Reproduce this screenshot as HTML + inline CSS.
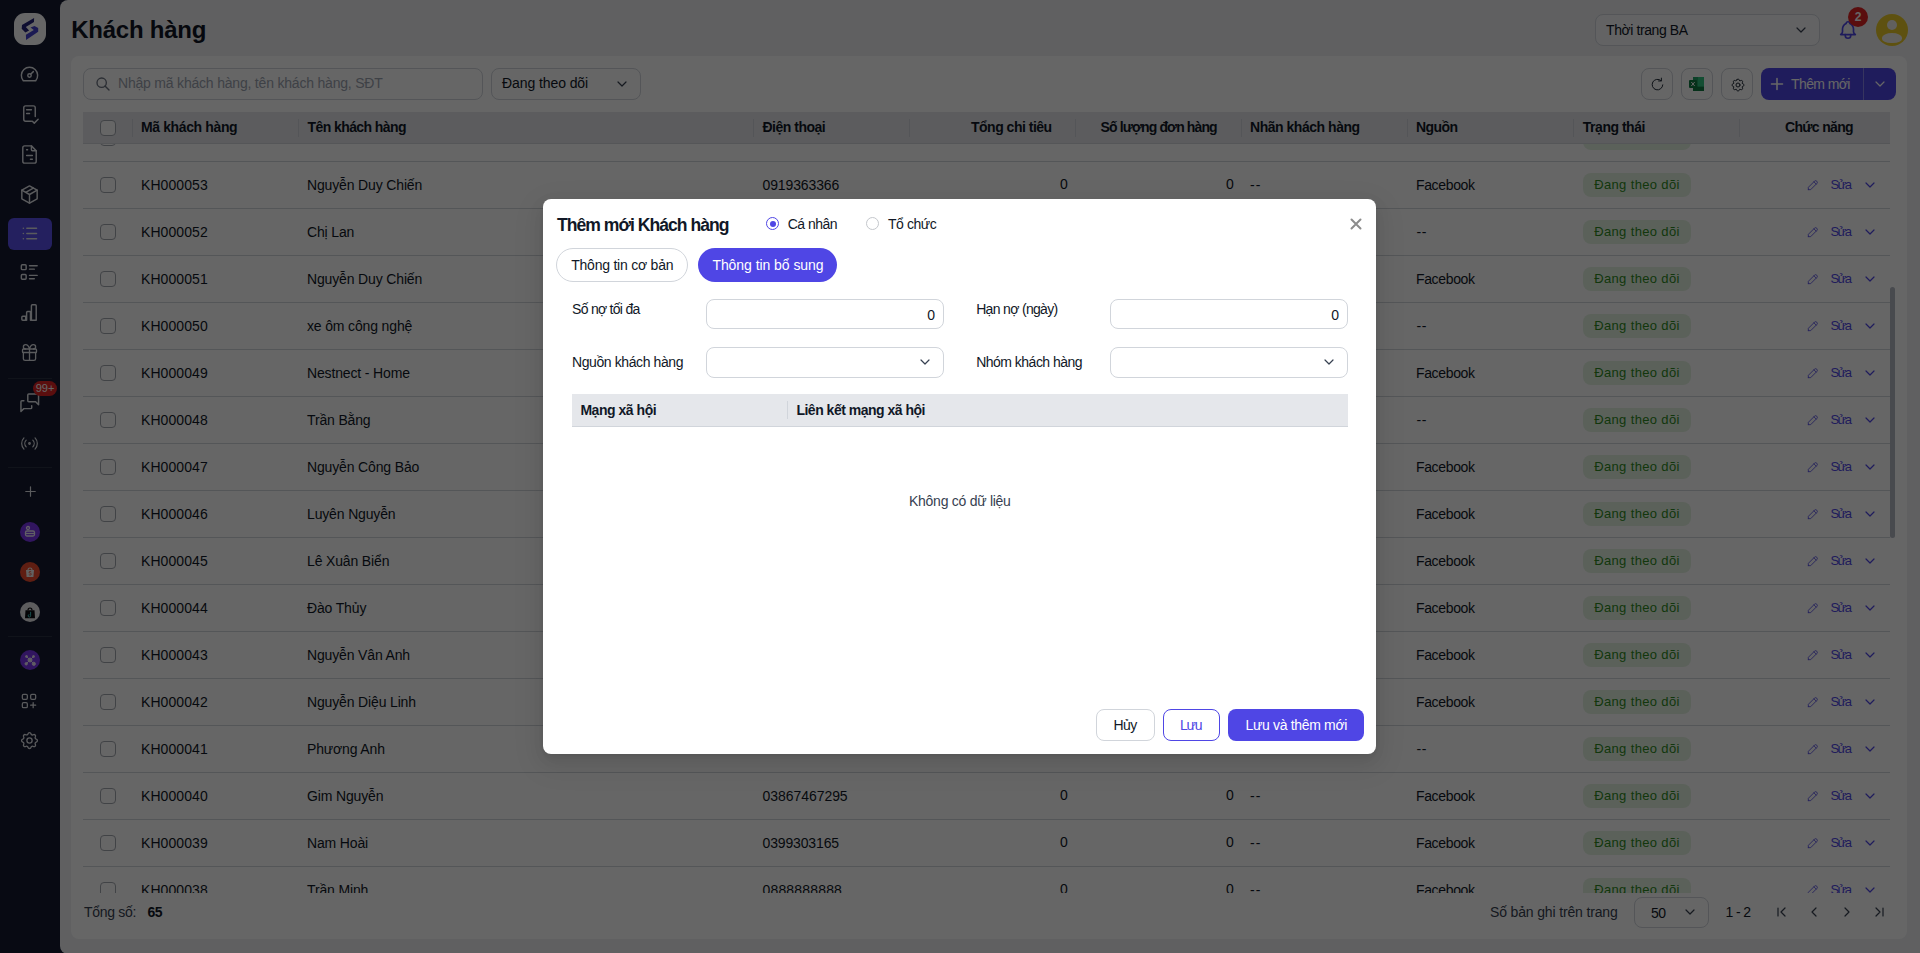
<!DOCTYPE html>
<html><head><meta charset="utf-8"><style>
*{box-sizing:content-box}
html,body{margin:0;padding:0;width:1920px;height:953px;overflow:hidden;background:#141a30;font-family:"Liberation Sans",sans-serif}
.si{position:absolute}
.sdiv{position:absolute;left:8px;width:44px;height:1px;background:#2a3042}
.circ{position:absolute;left:20px;width:20px;height:20px;border-radius:50%}
.circ svg{position:absolute;left:0;top:0}
.t{position:absolute;white-space:nowrap;color:#111827;line-height:18px}
.r14{font-size:14px;letter-spacing:-0.15px}
.b14{font-size:14px;font-weight:bold;letter-spacing:-0.45px;color:#111827}
.title{font-size:24px;font-weight:bold;line-height:30px;letter-spacing:-0.25px;color:#0f1523}
.mtitle{font-size:17.6px;font-weight:bold;line-height:22px;color:#111827}
.ph{color:#9ca3af}
.sua{color:#4f46e5}
.r13{font-size:13px}
.box{position:absolute;border:1px solid #d1d5db;background:#fff}
.cb{position:absolute;width:14px;height:14px;border:1px solid #a3a8b0;border-radius:4px;background:#fff}
.sep{position:absolute;left:83px;width:1807px;height:1px;background:#d3d6dc}
.tag{position:absolute;width:108px;height:24px;border-radius:8px;background:#e4f3e2}
.tagt{color:#2f8a22}
.radio{position:absolute;width:11px;height:11px;border:1px solid #c4c7cc;border-radius:50%;background:#fff}
.radio.on{border-color:#4f46e5}
.radio.on::after{content:"";position:absolute;left:2.5px;top:2.5px;width:6px;height:6px;border-radius:50%;background:#4f46e5}
</style></head><body>
<div id="side" style="position:absolute;left:0;top:0;width:60px;height:953px"><div style="position:absolute;left:14px;top:13px;width:32px;height:32px;border-radius:11px;background:#ffffff">
<svg width="32" height="32" viewBox="0 0 32 32" style="position:absolute;left:0;top:0">
<path d="M20.1 4.9 L20 9.1 L11.8 14.1 L15.1 17.5 L11.4 19.5 L7.7 15.8 L8 12.1 Z" fill="#24237a"/><path d="M16.5 14.4 L20.5 13.1 L24.2 15.1 L24.2 18.8 L12.1 26.9 L11.9 21.8 L19.8 17.1 Z" fill="#4543d0"/>
</svg></div><svg class="si" style="left:17.5px;top:62.5px" width="23" height="23" viewBox="0 0 24 24" fill="none" stroke="#e2e4e9" stroke-width="1.5" stroke-linecap="round" stroke-linejoin="round"><path d="M5.5 18.5 A8.5 8.5 0 1 1 18.5 18.5 Z"/><circle cx="12" cy="13" r="1.8"/><path d="M13.4 11.6 L16 9"/></svg><svg class="si" style="left:17.5px;top:102.5px" width="23" height="23" viewBox="0 0 24 24" fill="none" stroke="#e2e4e9" stroke-width="1.5" stroke-linecap="round" stroke-linejoin="round"><path d="M14 19 H8 a2 2 0 0 1 -2 -2 V5 a2 2 0 0 1 2 -2 h8 a2 2 0 0 1 2 2 v9"/><path d="M9 7 h5 M9 11 h3"/><path d="M15 19 l2 2 l4 -4"/></svg><svg class="si" style="left:17.5px;top:142.5px" width="23" height="23" viewBox="0 0 24 24" fill="none" stroke="#e2e4e9" stroke-width="1.5" stroke-linecap="round" stroke-linejoin="round"><path d="M14 3v4a1 1 0 0 0 1 1h4"/><path d="M17 21H7a2 2 0 0 1-2-2V5a2 2 0 0 1 2-2h7l5 5v11a2 2 0 0 1-2 2z"/><path d="M9 7h1M9 13h6M13 17h2"/></svg><svg class="si" style="left:17.5px;top:182.5px" width="23" height="23" viewBox="0 0 24 24" fill="none" stroke="#e2e4e9" stroke-width="1.5" stroke-linecap="round" stroke-linejoin="round"><path d="M12 3 l8 4.5 v9 l-8 4.5 l-8 -4.5 v-9 z"/><path d="M12 12 l8 -4.5 M12 12 v9 M12 12 l-8 -4.5"/><path d="M16 5.25 l-8 4.5"/></svg><div style="position:absolute;left:8px;top:218px;width:44px;height:32px;border-radius:6px;background:#5a50ee"></div><svg class="si" style="left:19.1px;top:223.4px" width="21" height="21" viewBox="0 0 24 24" fill="none" stroke="#e2e4e9" stroke-width="1.8" stroke-linecap="round" stroke-linejoin="round"><path d="M9 6h11M9 12h11M9 18h11"/><path d="M5 6v.01M5 12v.01M5 18v.01"/></svg><svg class="si" style="left:17.5px;top:260.5px" width="23" height="23" viewBox="0 0 24 24" fill="none" stroke="#e2e4e9" stroke-width="1.5" stroke-linecap="round" stroke-linejoin="round"><rect x="3.5" y="4" width="5" height="5" rx="1"/><rect x="3.5" y="14" width="5" height="5" rx="1"/><path d="M12 5h8M12 8.5h5M12 15h8M12 18.5h5"/></svg><svg class="si" style="left:17.5px;top:300.5px" width="23" height="23" viewBox="0 0 24 24" fill="none" stroke="#e2e4e9" stroke-width="1.5" stroke-linecap="round" stroke-linejoin="round"><path d="M4 17 a1 1 0 0 1 1-1 h3 v4 H5 a1 1 0 0 1-1-1z"/><path d="M9 20 V12 a1 1 0 0 1 1-1 h3 v9"/><path d="M14 20 V5 a1 1 0 0 1 1-1 h3 a1 1 0 0 1 1 1 v15 z"/></svg><svg class="si" style="left:18.5px;top:341.5px" width="21" height="21" viewBox="0 0 24 24" fill="none" stroke="#e2e4e9" stroke-width="1.5" stroke-linecap="round" stroke-linejoin="round"><rect x="4" y="8" width="16" height="4" rx="1"/><path d="M12 8v13"/><path d="M19 12v7a2 2 0 0 1-2 2H7a2 2 0 0 1-2-2v-7"/><path d="M7.5 8a2.5 2.5 0 0 1 0-5A4.8 8 0 0 1 12 8a4.8 8 0 0 1 4.5-5a2.5 2.5 0 0 1 0 5"/></svg><div class="sdiv" style="top:378px"></div><svg class="si" style="left:18.25px;top:391.25px" width="23.5" height="23.5" viewBox="0 0 24 24" fill="none" stroke="#e2e4e9" stroke-width="1.5" stroke-linecap="round" stroke-linejoin="round"><path d="M21 14 l-3 -3 h-7 a1 1 0 0 1 -1 -1 v-6 a1 1 0 0 1 1 -1 h9 a1 1 0 0 1 1 1 v10"/><path d="M14 15 v2 a1 1 0 0 1 -1 1 h-7 l-3 3 v-10 a1 1 0 0 1 1 -1 h2"/></svg><div style="position:absolute;left:33px;top:381px;width:24px;height:15px;border-radius:8px;background:#e02424;color:#fff;font:11px/15px 'Liberation Sans',sans-serif;text-align:center">99+</div><svg class="si" style="left:20.3px;top:433.5px" width="19" height="19" viewBox="0 0 24 24" fill="none" stroke="#e2e4e9" stroke-width="1.5" stroke-linecap="round" stroke-linejoin="round"><circle cx="12" cy="12" r="1"/><path d="M16.2 7.8 a6 6 0 0 1 0 8.4"/><path d="M7.8 16.2 a6 6 0 0 1 0 -8.4"/><path d="M19 5 a10 10 0 0 1 0 14"/><path d="M5 19 a10 10 0 0 1 0 -14"/></svg><div class="sdiv" style="top:467px"></div><svg class="si" style="left:20.5px;top:481.5px" width="19" height="19" viewBox="0 0 24 24" fill="none" stroke="#e2e4e9" stroke-width="1.5" stroke-linecap="round" stroke-linejoin="round"><path d="M12 6v12M6 12h12"/></svg><div class="circ" style="top:522px;background:#7b36ee"><svg width="20" height="20" viewBox="0 0 20 20" fill="none" stroke="#f3eefc" stroke-width="1.3"><rect x="5.5" y="9" width="9" height="5" rx="1.5"/><path d="M5.5 11.5h9"/><circle cx="8" cy="6" r="1.5"/></svg></div><div class="circ" style="top:562px;background:#ee4d2d"><svg width="20" height="20" viewBox="0 0 20 20"><path d="M6 8h8l-.6 7h-6.8z" fill="#f5f5f5"/><path d="M8 8a2 2 0 0 1 4 0" stroke="#f5f5f5" fill="none" stroke-width="1.1"/><path d="M11.2 9.8 c-1.4-.8-2.8 0-2 .9 c.9.6 2.6.6 2 1.8 c-.6 .9-2 .5-2.4 0" stroke="#ee4d2d" fill="none" stroke-width="0.9"/></svg></div><div class="circ" style="top:602px;background:#e8e8ea"><svg width="20" height="20" viewBox="0 0 20 20"><path d="M5.5 8.2 h9 l.5 8 h-10 z" fill="#0c0c10"/><path d="M8 8.2 a2 2.2 0 0 1 4 0" stroke="#0c0c10" fill="none" stroke-width="1.2"/><path d="M10.6 9.8 v4 a1.2 1.2 0 1 1 -1.2 -1.2" stroke="#41d6d2" fill="none" stroke-width="0.9"/></svg></div><div class="sdiv" style="top:636px"></div><div class="circ" style="top:650px;background:#7b36ee"><svg width="20" height="20" viewBox="0 0 20 20" fill="#efe6fb" stroke="#efe6fb" stroke-width="1"><circle cx="10" cy="10" r="2"/><circle cx="6.2" cy="13.8" r="1.2"/><circle cx="13.8" cy="13.8" r="1.6"/><circle cx="6.5" cy="6.5" r="1"/><circle cx="13.5" cy="6.5" r="1"/><path d="M6.5 6.5 L13.8 13.8 M13.5 6.5 L6.2 13.8"/></svg></div><svg class="si" style="left:18.5px;top:691.0px" width="20" height="20" viewBox="0 0 24 24" fill="none" stroke="#e2e4e9" stroke-width="1.5" stroke-linecap="round" stroke-linejoin="round"><rect x="4" y="4" width="6" height="6" rx="1.5"/><rect x="14" y="4" width="6" height="6" rx="1.5"/><rect x="4" y="14" width="6" height="6" rx="1.5"/><path d="M14 17h6M17 14v6"/></svg><svg class="si" style="left:18.5px;top:729.5px" width="21" height="21" viewBox="0 0 24 24" fill="none" stroke="#e2e4e9" stroke-width="1.5" stroke-linecap="round" stroke-linejoin="round"><path d="M10.3 4.3c.4-1.8 3-1.8 3.4 0a1.7 1.7 0 0 0 2.6 1.1c1.5-.9 3.3.8 2.4 2.4a1.7 1.7 0 0 0 1 2.6c1.8.4 1.8 3 0 3.4a1.7 1.7 0 0 0-1 2.6c.9 1.5-.8 3.3-2.4 2.4a1.7 1.7 0 0 0-2.6 1c-.4 1.8-3 1.8-3.4 0a1.7 1.7 0 0 0-2.6-1c-1.5.9-3.3-.8-2.4-2.4a1.7 1.7 0 0 0-1-2.6c-1.8-.4-1.8-3 0-3.4a1.7 1.7 0 0 0 1-2.6c-.9-1.5.8-3.3 2.4-2.4 1 .6 2.3.1 2.6-1.1z"/><circle cx="12" cy="12" r="3"/></svg></div>
<div id="main" style="position:absolute;left:60px;top:0;width:1860px;height:954px;background:#eff0f3;border-radius:8px 0 0 8px"></div>
<div id="card" style="position:absolute;left:71px;top:56px;width:1836px;height:883px;background:#fff;border-radius:8px"></div>
<div class="t title" style="left:71.30px;top:15px;letter-spacing:-0.256px;">Khách hàng</div><div class="box" style="left:1595px;top:14px;width:223px;height:30px;border-radius:8px;background:#f7f7f9"></div><div class="t r14 sel" style="left:1606.00px;top:21px;letter-spacing:-0.417px;">Thời trang BA</div><svg style="position:absolute;left:1795px;top:24px" width="12" height="12" viewBox="0 0 12 12" fill="none" stroke="#374151" stroke-width="1.2" stroke-linecap="round" stroke-linejoin="round"><path d="M2 4 L6 8 L10 4"/></svg><svg style="position:absolute;left:1837px;top:19px" width="22" height="22" viewBox="0 0 24 24" fill="none" stroke="#4f46e5" stroke-width="1.8" stroke-linecap="round" stroke-linejoin="round"><path d="M10 5a2 2 0 1 1 4 0a7 7 0 0 1 4 6v3a4 4 0 0 0 2 3H4a4 4 0 0 0 2-3v-3a7 7 0 0 1 4-6"/><path d="M9 17v1a3 3 0 0 0 6 0v-1"/></svg><div style="position:absolute;left:1848px;top:7px;width:20px;height:20px;border-radius:50%;background:#e02424;color:#fff;font:bold 12px/20px 'Liberation Sans',sans-serif;text-align:center">2</div><div style="position:absolute;left:1876px;top:14px;width:32px;height:32px;border-radius:50%;background:#eccb2a;overflow:hidden"><div style="position:absolute;left:11px;top:5.6px;width:10px;height:10px;border-radius:50%;background:#f3f0ec"></div><div style="position:absolute;left:6px;top:19px;width:20px;height:9.5px;border-radius:50% 50% 45% 45%;background:#f3f0ec"></div></div>
<div class="box" style="left:83px;top:68px;width:398px;height:30px;border-radius:8px"></div><svg style="position:absolute;left:95px;top:76px" width="16" height="16" viewBox="0 0 24 24" fill="none" stroke="#6b7280" stroke-width="2" stroke-linecap="round"><circle cx="10" cy="10" r="7"/><path d="M21 21l-6-6"/></svg><div class="t r14 ph" style="left:118.00px;top:74px;letter-spacing:-0.200px;">Nhập mã khách hàng, tên khách hàng, SĐT</div><div class="box" style="left:491px;top:68px;width:148px;height:30px;border-radius:8px"></div><div class="t r14" style="left:502.00px;top:74px;letter-spacing:-0.083px;">Đang theo dõi</div><svg style="position:absolute;left:616px;top:78px" width="12" height="12" viewBox="0 0 12 12" fill="none" stroke="#374151" stroke-width="1.2" stroke-linecap="round" stroke-linejoin="round"><path d="M2 4 L6 8 L10 4"/></svg><div class="box" style="left:1641px;top:68px;width:30px;height:30px;border-radius:8px"></div><div class="box" style="left:1681px;top:68px;width:30px;height:30px;border-radius:8px"></div><div class="box" style="left:1721px;top:68px;width:30px;height:30px;border-radius:8px"></div><svg style="position:absolute;left:1648.5px;top:75.5px" width="17" height="17" viewBox="0 0 24 24" fill="none" stroke="#1f2937" stroke-width="1.4" stroke-linecap="round" stroke-linejoin="round"><path d="M19.5 12.5 A7.5 7.5 0 1 1 17 6.5"/><path d="M17.5 3 v4 h-4"/></svg><svg style="position:absolute;left:1689px;top:77px" width="15" height="14" viewBox="0 0 15 14"><rect x="4" y="0" width="11" height="14" fill="#21a366"/><rect x="4" y="9.5" width="11" height="4.5" fill="#107c41"/><rect x="9" y="0" width="6" height="9.5" fill="#33c481"/><rect x="0" y="3" width="8" height="8" rx="1" fill="#107c41"/><path d="M2.3 5 L5.7 9 M5.7 5 L2.3 9" stroke="#fff" stroke-width="1"/></svg><svg style="position:absolute;left:1729.5px;top:76.5px" width="16" height="16" viewBox="0 0 24 24" fill="none" stroke="#1f2937" stroke-width="1.5" stroke-linecap="round" stroke-linejoin="round"><path d="M10.3 4.3c.4-1.8 3-1.8 3.4 0a1.7 1.7 0 0 0 2.6 1.1c1.5-.9 3.3.8 2.4 2.4a1.7 1.7 0 0 0 1 2.6c1.8.4 1.8 3 0 3.4a1.7 1.7 0 0 0-1 2.6c.9 1.5-.8 3.3-2.4 2.4a1.7 1.7 0 0 0-2.6 1c-.4 1.8-3 1.8-3.4 0a1.7 1.7 0 0 0-2.6-1c-1.5.9-3.3-.8-2.4-2.4a1.7 1.7 0 0 0-1-2.6c-1.8-.4-1.8-3 0-3.4a1.7 1.7 0 0 0 1-2.6c-.9-1.5.8-3.3 2.4-2.4 1 .6 2.3.1 2.6-1.1z"/><circle cx="12" cy="12" r="3"/></svg><div style="position:absolute;left:1761px;top:68px;width:135px;height:32px;border-radius:8px;background:#4f46e5"></div><div style="position:absolute;left:1863px;top:68px;width:1px;height:32px;background:#8a84ee"></div><svg style="position:absolute;left:1770px;top:77px" width="14" height="14" viewBox="0 0 14 14" stroke="#fff" stroke-width="1.6" stroke-linecap="round"><path d="M7 1.5v11M1.5 7h11"/></svg><div class="t r14" style="left:1791.00px;top:75px;letter-spacing:-0.600px;color:#fff">Thêm mới</div><svg style="position:absolute;left:1874px;top:78px" width="12" height="12" viewBox="0 0 12 12" fill="none" stroke="#fff" stroke-width="1.2" stroke-linecap="round" stroke-linejoin="round"><path d="M2 4 L6 8 L10 4"/></svg><div id="tb" style="position:absolute;left:0;top:144px;width:1920px;height:749px;overflow:hidden"><div style="position:absolute;left:0;top:-144px;width:1920px;height:1000px"><div class="sep" style="top:161px"></div><div class="cb" style="left:100px;top:130px"></div><div class="t r14" style="left:141.00px;top:129px;letter-spacing:0.071px;">KH000054</div><div class="t r14" style="left:1060px;top:128px;">0</div><div class="t r14" style="left:1226px;top:128px;">0</div><div class="t r14 dash" style="left:1250.00px;top:129px;letter-spacing:1.000px;">--</div><div class="t r14" style="left:1416.00px;top:129px;letter-spacing:-0.357px;">Facebook</div><div class="tag" style="left:1583px;top:125.7px"></div><svg style="position:absolute;left:1806px;top:131px" width="14" height="14" viewBox="0 0 24 24" fill="none" stroke="#5b54e6" stroke-width="1.5" stroke-linecap="round" stroke-linejoin="round"><path d="M4 20h4L18.5 9.5a2.8 2.8 0 0 0-4-4L4 16v4"/><path d="M13.5 6.5l4 4"/></svg><div class="t r13 sua" style="left:1830.40px;top:129px;letter-spacing:-1.550px;">Sửa</div><svg style="position:absolute;left:1864px;top:132px" width="12" height="12" viewBox="0 0 12 12" fill="none" stroke="#4f46e5" stroke-width="1.2" stroke-linecap="round" stroke-linejoin="round"><path d="M2 4 L6 8 L10 4"/></svg><div class="sep" style="top:208px"></div><div class="cb" style="left:100px;top:177px"></div><div class="t r14" style="left:141.00px;top:176px;letter-spacing:0.071px;">KH000053</div><div class="t r14" style="left:307px;top:176px;">Nguyễn Duy Chiến</div><div class="t r14" style="left:762.50px;top:176px;letter-spacing:-0.122px;">0919363366</div><div class="t r14" style="left:1060px;top:175px;">0</div><div class="t r14" style="left:1226px;top:175px;">0</div><div class="t r14 dash" style="left:1250.00px;top:176px;letter-spacing:1.000px;">--</div><div class="t r14" style="left:1416.00px;top:176px;letter-spacing:-0.357px;">Facebook</div><div class="tag" style="left:1583px;top:172.7px"></div><div class="t r13 tagt" style="left:1594.20px;top:176px;letter-spacing:0.358px;">Đang theo dõi</div><svg style="position:absolute;left:1806px;top:178px" width="14" height="14" viewBox="0 0 24 24" fill="none" stroke="#5b54e6" stroke-width="1.5" stroke-linecap="round" stroke-linejoin="round"><path d="M4 20h4L18.5 9.5a2.8 2.8 0 0 0-4-4L4 16v4"/><path d="M13.5 6.5l4 4"/></svg><div class="t r13 sua" style="left:1830.40px;top:176px;letter-spacing:-1.550px;">Sửa</div><svg style="position:absolute;left:1864px;top:179px" width="12" height="12" viewBox="0 0 12 12" fill="none" stroke="#4f46e5" stroke-width="1.2" stroke-linecap="round" stroke-linejoin="round"><path d="M2 4 L6 8 L10 4"/></svg><div class="sep" style="top:255px"></div><div class="cb" style="left:100px;top:224px"></div><div class="t r14" style="left:141.00px;top:223px;letter-spacing:0.071px;">KH000052</div><div class="t r14" style="left:307px;top:223px;">Chị Lan</div><div class="t r14" style="left:762.5px;top:223px;">0987654321</div><div class="t r14" style="left:1060px;top:222px;">0</div><div class="t r14" style="left:1226px;top:222px;">0</div><div class="t r14 dash" style="left:1250.00px;top:223px;letter-spacing:1.000px;">--</div><div class="t r14 dash" style="left:1416.60px;top:223px;letter-spacing:0.400px;">--</div><div class="tag" style="left:1583px;top:219.7px"></div><div class="t r13 tagt" style="left:1594.20px;top:223px;letter-spacing:0.358px;">Đang theo dõi</div><svg style="position:absolute;left:1806px;top:225px" width="14" height="14" viewBox="0 0 24 24" fill="none" stroke="#5b54e6" stroke-width="1.5" stroke-linecap="round" stroke-linejoin="round"><path d="M4 20h4L18.5 9.5a2.8 2.8 0 0 0-4-4L4 16v4"/><path d="M13.5 6.5l4 4"/></svg><div class="t r13 sua" style="left:1830.40px;top:223px;letter-spacing:-1.550px;">Sửa</div><svg style="position:absolute;left:1864px;top:226px" width="12" height="12" viewBox="0 0 12 12" fill="none" stroke="#4f46e5" stroke-width="1.2" stroke-linecap="round" stroke-linejoin="round"><path d="M2 4 L6 8 L10 4"/></svg><div class="sep" style="top:302px"></div><div class="cb" style="left:100px;top:271px"></div><div class="t r14" style="left:141.00px;top:270px;letter-spacing:0.071px;">KH000051</div><div class="t r14" style="left:307px;top:270px;">Nguyễn Duy Chiến</div><div class="t r14" style="left:762.50px;top:270px;letter-spacing:-0.122px;">0919363366</div><div class="t r14" style="left:1060px;top:269px;">0</div><div class="t r14" style="left:1226px;top:269px;">0</div><div class="t r14 dash" style="left:1250.00px;top:270px;letter-spacing:1.000px;">--</div><div class="t r14" style="left:1416.00px;top:270px;letter-spacing:-0.357px;">Facebook</div><div class="tag" style="left:1583px;top:266.7px"></div><div class="t r13 tagt" style="left:1594.20px;top:270px;letter-spacing:0.358px;">Đang theo dõi</div><svg style="position:absolute;left:1806px;top:272px" width="14" height="14" viewBox="0 0 24 24" fill="none" stroke="#5b54e6" stroke-width="1.5" stroke-linecap="round" stroke-linejoin="round"><path d="M4 20h4L18.5 9.5a2.8 2.8 0 0 0-4-4L4 16v4"/><path d="M13.5 6.5l4 4"/></svg><div class="t r13 sua" style="left:1830.40px;top:270px;letter-spacing:-1.550px;">Sửa</div><svg style="position:absolute;left:1864px;top:273px" width="12" height="12" viewBox="0 0 12 12" fill="none" stroke="#4f46e5" stroke-width="1.2" stroke-linecap="round" stroke-linejoin="round"><path d="M2 4 L6 8 L10 4"/></svg><div class="sep" style="top:349px"></div><div class="cb" style="left:100px;top:318px"></div><div class="t r14" style="left:141.00px;top:317px;letter-spacing:0.071px;">KH000050</div><div class="t r14" style="left:307px;top:317px;">xe ôm công nghệ</div><div class="t r14" style="left:762.5px;top:317px;">0912345678</div><div class="t r14" style="left:1060px;top:316px;">0</div><div class="t r14" style="left:1226px;top:316px;">0</div><div class="t r14 dash" style="left:1250.00px;top:317px;letter-spacing:1.000px;">--</div><div class="t r14 dash" style="left:1416.60px;top:317px;letter-spacing:0.400px;">--</div><div class="tag" style="left:1583px;top:313.7px"></div><div class="t r13 tagt" style="left:1594.20px;top:317px;letter-spacing:0.358px;">Đang theo dõi</div><svg style="position:absolute;left:1806px;top:319px" width="14" height="14" viewBox="0 0 24 24" fill="none" stroke="#5b54e6" stroke-width="1.5" stroke-linecap="round" stroke-linejoin="round"><path d="M4 20h4L18.5 9.5a2.8 2.8 0 0 0-4-4L4 16v4"/><path d="M13.5 6.5l4 4"/></svg><div class="t r13 sua" style="left:1830.40px;top:317px;letter-spacing:-1.550px;">Sửa</div><svg style="position:absolute;left:1864px;top:320px" width="12" height="12" viewBox="0 0 12 12" fill="none" stroke="#4f46e5" stroke-width="1.2" stroke-linecap="round" stroke-linejoin="round"><path d="M2 4 L6 8 L10 4"/></svg><div class="sep" style="top:396px"></div><div class="cb" style="left:100px;top:365px"></div><div class="t r14" style="left:141.00px;top:364px;letter-spacing:0.071px;">KH000049</div><div class="t r14" style="left:307px;top:364px;">Nestnect - Home</div><div class="t r14" style="left:762.5px;top:364px;">0912345678</div><div class="t r14" style="left:1060px;top:363px;">0</div><div class="t r14" style="left:1226px;top:363px;">0</div><div class="t r14 dash" style="left:1250.00px;top:364px;letter-spacing:1.000px;">--</div><div class="t r14" style="left:1416.00px;top:364px;letter-spacing:-0.357px;">Facebook</div><div class="tag" style="left:1583px;top:360.7px"></div><div class="t r13 tagt" style="left:1594.20px;top:364px;letter-spacing:0.358px;">Đang theo dõi</div><svg style="position:absolute;left:1806px;top:366px" width="14" height="14" viewBox="0 0 24 24" fill="none" stroke="#5b54e6" stroke-width="1.5" stroke-linecap="round" stroke-linejoin="round"><path d="M4 20h4L18.5 9.5a2.8 2.8 0 0 0-4-4L4 16v4"/><path d="M13.5 6.5l4 4"/></svg><div class="t r13 sua" style="left:1830.40px;top:364px;letter-spacing:-1.550px;">Sửa</div><svg style="position:absolute;left:1864px;top:367px" width="12" height="12" viewBox="0 0 12 12" fill="none" stroke="#4f46e5" stroke-width="1.2" stroke-linecap="round" stroke-linejoin="round"><path d="M2 4 L6 8 L10 4"/></svg><div class="sep" style="top:443px"></div><div class="cb" style="left:100px;top:412px"></div><div class="t r14" style="left:141.00px;top:411px;letter-spacing:0.071px;">KH000048</div><div class="t r14" style="left:307px;top:411px;">Trần Bằng</div><div class="t r14" style="left:762.5px;top:411px;">0912345678</div><div class="t r14" style="left:1060px;top:410px;">0</div><div class="t r14" style="left:1226px;top:410px;">0</div><div class="t r14 dash" style="left:1250.00px;top:411px;letter-spacing:1.000px;">--</div><div class="t r14 dash" style="left:1416.60px;top:411px;letter-spacing:0.400px;">--</div><div class="tag" style="left:1583px;top:407.7px"></div><div class="t r13 tagt" style="left:1594.20px;top:411px;letter-spacing:0.358px;">Đang theo dõi</div><svg style="position:absolute;left:1806px;top:413px" width="14" height="14" viewBox="0 0 24 24" fill="none" stroke="#5b54e6" stroke-width="1.5" stroke-linecap="round" stroke-linejoin="round"><path d="M4 20h4L18.5 9.5a2.8 2.8 0 0 0-4-4L4 16v4"/><path d="M13.5 6.5l4 4"/></svg><div class="t r13 sua" style="left:1830.40px;top:411px;letter-spacing:-1.550px;">Sửa</div><svg style="position:absolute;left:1864px;top:414px" width="12" height="12" viewBox="0 0 12 12" fill="none" stroke="#4f46e5" stroke-width="1.2" stroke-linecap="round" stroke-linejoin="round"><path d="M2 4 L6 8 L10 4"/></svg><div class="sep" style="top:490px"></div><div class="cb" style="left:100px;top:459px"></div><div class="t r14" style="left:141.00px;top:458px;letter-spacing:0.071px;">KH000047</div><div class="t r14" style="left:307px;top:458px;">Nguyễn Công Bảo</div><div class="t r14" style="left:762.5px;top:458px;">0912345678</div><div class="t r14" style="left:1060px;top:457px;">0</div><div class="t r14" style="left:1226px;top:457px;">0</div><div class="t r14 dash" style="left:1250.00px;top:458px;letter-spacing:1.000px;">--</div><div class="t r14" style="left:1416.00px;top:458px;letter-spacing:-0.357px;">Facebook</div><div class="tag" style="left:1583px;top:454.7px"></div><div class="t r13 tagt" style="left:1594.20px;top:458px;letter-spacing:0.358px;">Đang theo dõi</div><svg style="position:absolute;left:1806px;top:460px" width="14" height="14" viewBox="0 0 24 24" fill="none" stroke="#5b54e6" stroke-width="1.5" stroke-linecap="round" stroke-linejoin="round"><path d="M4 20h4L18.5 9.5a2.8 2.8 0 0 0-4-4L4 16v4"/><path d="M13.5 6.5l4 4"/></svg><div class="t r13 sua" style="left:1830.40px;top:458px;letter-spacing:-1.550px;">Sửa</div><svg style="position:absolute;left:1864px;top:461px" width="12" height="12" viewBox="0 0 12 12" fill="none" stroke="#4f46e5" stroke-width="1.2" stroke-linecap="round" stroke-linejoin="round"><path d="M2 4 L6 8 L10 4"/></svg><div class="sep" style="top:537px"></div><div class="cb" style="left:100px;top:506px"></div><div class="t r14" style="left:141.00px;top:505px;letter-spacing:0.071px;">KH000046</div><div class="t r14" style="left:307px;top:505px;">Luyên Nguyễn</div><div class="t r14" style="left:762.5px;top:505px;">0912345678</div><div class="t r14" style="left:1060px;top:504px;">0</div><div class="t r14" style="left:1226px;top:504px;">0</div><div class="t r14 dash" style="left:1250.00px;top:505px;letter-spacing:1.000px;">--</div><div class="t r14" style="left:1416.00px;top:505px;letter-spacing:-0.357px;">Facebook</div><div class="tag" style="left:1583px;top:501.7px"></div><div class="t r13 tagt" style="left:1594.20px;top:505px;letter-spacing:0.358px;">Đang theo dõi</div><svg style="position:absolute;left:1806px;top:507px" width="14" height="14" viewBox="0 0 24 24" fill="none" stroke="#5b54e6" stroke-width="1.5" stroke-linecap="round" stroke-linejoin="round"><path d="M4 20h4L18.5 9.5a2.8 2.8 0 0 0-4-4L4 16v4"/><path d="M13.5 6.5l4 4"/></svg><div class="t r13 sua" style="left:1830.40px;top:505px;letter-spacing:-1.550px;">Sửa</div><svg style="position:absolute;left:1864px;top:508px" width="12" height="12" viewBox="0 0 12 12" fill="none" stroke="#4f46e5" stroke-width="1.2" stroke-linecap="round" stroke-linejoin="round"><path d="M2 4 L6 8 L10 4"/></svg><div class="sep" style="top:584px"></div><div class="cb" style="left:100px;top:553px"></div><div class="t r14" style="left:141.00px;top:552px;letter-spacing:0.071px;">KH000045</div><div class="t r14" style="left:307px;top:552px;">Lê Xuân Biển</div><div class="t r14" style="left:762.5px;top:552px;">0912345678</div><div class="t r14" style="left:1060px;top:551px;">0</div><div class="t r14" style="left:1226px;top:551px;">0</div><div class="t r14 dash" style="left:1250.00px;top:552px;letter-spacing:1.000px;">--</div><div class="t r14" style="left:1416.00px;top:552px;letter-spacing:-0.357px;">Facebook</div><div class="tag" style="left:1583px;top:548.7px"></div><div class="t r13 tagt" style="left:1594.20px;top:552px;letter-spacing:0.358px;">Đang theo dõi</div><svg style="position:absolute;left:1806px;top:554px" width="14" height="14" viewBox="0 0 24 24" fill="none" stroke="#5b54e6" stroke-width="1.5" stroke-linecap="round" stroke-linejoin="round"><path d="M4 20h4L18.5 9.5a2.8 2.8 0 0 0-4-4L4 16v4"/><path d="M13.5 6.5l4 4"/></svg><div class="t r13 sua" style="left:1830.40px;top:552px;letter-spacing:-1.550px;">Sửa</div><svg style="position:absolute;left:1864px;top:555px" width="12" height="12" viewBox="0 0 12 12" fill="none" stroke="#4f46e5" stroke-width="1.2" stroke-linecap="round" stroke-linejoin="round"><path d="M2 4 L6 8 L10 4"/></svg><div class="sep" style="top:631px"></div><div class="cb" style="left:100px;top:600px"></div><div class="t r14" style="left:141.00px;top:599px;letter-spacing:0.071px;">KH000044</div><div class="t r14" style="left:307px;top:599px;">Đào Thủy</div><div class="t r14" style="left:762.5px;top:599px;">0912345678</div><div class="t r14" style="left:1060px;top:598px;">0</div><div class="t r14" style="left:1226px;top:598px;">0</div><div class="t r14 dash" style="left:1250.00px;top:599px;letter-spacing:1.000px;">--</div><div class="t r14" style="left:1416.00px;top:599px;letter-spacing:-0.357px;">Facebook</div><div class="tag" style="left:1583px;top:595.7px"></div><div class="t r13 tagt" style="left:1594.20px;top:599px;letter-spacing:0.358px;">Đang theo dõi</div><svg style="position:absolute;left:1806px;top:601px" width="14" height="14" viewBox="0 0 24 24" fill="none" stroke="#5b54e6" stroke-width="1.5" stroke-linecap="round" stroke-linejoin="round"><path d="M4 20h4L18.5 9.5a2.8 2.8 0 0 0-4-4L4 16v4"/><path d="M13.5 6.5l4 4"/></svg><div class="t r13 sua" style="left:1830.40px;top:599px;letter-spacing:-1.550px;">Sửa</div><svg style="position:absolute;left:1864px;top:602px" width="12" height="12" viewBox="0 0 12 12" fill="none" stroke="#4f46e5" stroke-width="1.2" stroke-linecap="round" stroke-linejoin="round"><path d="M2 4 L6 8 L10 4"/></svg><div class="sep" style="top:678px"></div><div class="cb" style="left:100px;top:647px"></div><div class="t r14" style="left:141.00px;top:646px;letter-spacing:0.071px;">KH000043</div><div class="t r14" style="left:307px;top:646px;">Nguyễn Vân Anh</div><div class="t r14" style="left:762.5px;top:646px;">0912345678</div><div class="t r14" style="left:1060px;top:645px;">0</div><div class="t r14" style="left:1226px;top:645px;">0</div><div class="t r14 dash" style="left:1250.00px;top:646px;letter-spacing:1.000px;">--</div><div class="t r14" style="left:1416.00px;top:646px;letter-spacing:-0.357px;">Facebook</div><div class="tag" style="left:1583px;top:642.7px"></div><div class="t r13 tagt" style="left:1594.20px;top:646px;letter-spacing:0.358px;">Đang theo dõi</div><svg style="position:absolute;left:1806px;top:648px" width="14" height="14" viewBox="0 0 24 24" fill="none" stroke="#5b54e6" stroke-width="1.5" stroke-linecap="round" stroke-linejoin="round"><path d="M4 20h4L18.5 9.5a2.8 2.8 0 0 0-4-4L4 16v4"/><path d="M13.5 6.5l4 4"/></svg><div class="t r13 sua" style="left:1830.40px;top:646px;letter-spacing:-1.550px;">Sửa</div><svg style="position:absolute;left:1864px;top:649px" width="12" height="12" viewBox="0 0 12 12" fill="none" stroke="#4f46e5" stroke-width="1.2" stroke-linecap="round" stroke-linejoin="round"><path d="M2 4 L6 8 L10 4"/></svg><div class="sep" style="top:725px"></div><div class="cb" style="left:100px;top:694px"></div><div class="t r14" style="left:141.00px;top:693px;letter-spacing:0.071px;">KH000042</div><div class="t r14" style="left:307px;top:693px;">Nguyễn Diệu Linh</div><div class="t r14" style="left:762.5px;top:693px;">0912345678</div><div class="t r14" style="left:1060px;top:692px;">0</div><div class="t r14" style="left:1226px;top:692px;">0</div><div class="t r14 dash" style="left:1250.00px;top:693px;letter-spacing:1.000px;">--</div><div class="t r14" style="left:1416.00px;top:693px;letter-spacing:-0.357px;">Facebook</div><div class="tag" style="left:1583px;top:689.7px"></div><div class="t r13 tagt" style="left:1594.20px;top:693px;letter-spacing:0.358px;">Đang theo dõi</div><svg style="position:absolute;left:1806px;top:695px" width="14" height="14" viewBox="0 0 24 24" fill="none" stroke="#5b54e6" stroke-width="1.5" stroke-linecap="round" stroke-linejoin="round"><path d="M4 20h4L18.5 9.5a2.8 2.8 0 0 0-4-4L4 16v4"/><path d="M13.5 6.5l4 4"/></svg><div class="t r13 sua" style="left:1830.40px;top:693px;letter-spacing:-1.550px;">Sửa</div><svg style="position:absolute;left:1864px;top:696px" width="12" height="12" viewBox="0 0 12 12" fill="none" stroke="#4f46e5" stroke-width="1.2" stroke-linecap="round" stroke-linejoin="round"><path d="M2 4 L6 8 L10 4"/></svg><div class="sep" style="top:772px"></div><div class="cb" style="left:100px;top:741px"></div><div class="t r14" style="left:141.00px;top:740px;letter-spacing:0.071px;">KH000041</div><div class="t r14" style="left:307px;top:740px;">Phương Anh</div><div class="t r14 dash" style="left:1416.60px;top:740px;letter-spacing:0.400px;">--</div><div class="tag" style="left:1583px;top:736.7px"></div><div class="t r13 tagt" style="left:1594.20px;top:740px;letter-spacing:0.358px;">Đang theo dõi</div><svg style="position:absolute;left:1806px;top:742px" width="14" height="14" viewBox="0 0 24 24" fill="none" stroke="#5b54e6" stroke-width="1.5" stroke-linecap="round" stroke-linejoin="round"><path d="M4 20h4L18.5 9.5a2.8 2.8 0 0 0-4-4L4 16v4"/><path d="M13.5 6.5l4 4"/></svg><div class="t r13 sua" style="left:1830.40px;top:740px;letter-spacing:-1.550px;">Sửa</div><svg style="position:absolute;left:1864px;top:743px" width="12" height="12" viewBox="0 0 12 12" fill="none" stroke="#4f46e5" stroke-width="1.2" stroke-linecap="round" stroke-linejoin="round"><path d="M2 4 L6 8 L10 4"/></svg><div class="sep" style="top:819px"></div><div class="cb" style="left:100px;top:788px"></div><div class="t r14" style="left:141.00px;top:787px;letter-spacing:0.071px;">KH000040</div><div class="t r14" style="left:307px;top:787px;">Gim Nguyễn</div><div class="t r14" style="left:762.50px;top:787px;letter-spacing:-0.050px;">03867467295</div><div class="t r14" style="left:1060px;top:786px;">0</div><div class="t r14" style="left:1226px;top:786px;">0</div><div class="t r14 dash" style="left:1250.00px;top:787px;letter-spacing:1.000px;">--</div><div class="t r14" style="left:1416.00px;top:787px;letter-spacing:-0.357px;">Facebook</div><div class="tag" style="left:1583px;top:783.7px"></div><div class="t r13 tagt" style="left:1594.20px;top:787px;letter-spacing:0.358px;">Đang theo dõi</div><svg style="position:absolute;left:1806px;top:789px" width="14" height="14" viewBox="0 0 24 24" fill="none" stroke="#5b54e6" stroke-width="1.5" stroke-linecap="round" stroke-linejoin="round"><path d="M4 20h4L18.5 9.5a2.8 2.8 0 0 0-4-4L4 16v4"/><path d="M13.5 6.5l4 4"/></svg><div class="t r13 sua" style="left:1830.40px;top:787px;letter-spacing:-1.550px;">Sửa</div><svg style="position:absolute;left:1864px;top:790px" width="12" height="12" viewBox="0 0 12 12" fill="none" stroke="#4f46e5" stroke-width="1.2" stroke-linecap="round" stroke-linejoin="round"><path d="M2 4 L6 8 L10 4"/></svg><div class="sep" style="top:866px"></div><div class="cb" style="left:100px;top:835px"></div><div class="t r14" style="left:141.00px;top:834px;letter-spacing:0.071px;">KH000039</div><div class="t r14" style="left:307px;top:834px;">Nam Hoài</div><div class="t r14" style="left:762.50px;top:834px;letter-spacing:-0.144px;">0399303165</div><div class="t r14" style="left:1060px;top:833px;">0</div><div class="t r14" style="left:1226px;top:833px;">0</div><div class="t r14 dash" style="left:1250.00px;top:834px;letter-spacing:1.000px;">--</div><div class="t r14" style="left:1416.00px;top:834px;letter-spacing:-0.357px;">Facebook</div><div class="tag" style="left:1583px;top:830.7px"></div><div class="t r13 tagt" style="left:1594.20px;top:834px;letter-spacing:0.358px;">Đang theo dõi</div><svg style="position:absolute;left:1806px;top:836px" width="14" height="14" viewBox="0 0 24 24" fill="none" stroke="#5b54e6" stroke-width="1.5" stroke-linecap="round" stroke-linejoin="round"><path d="M4 20h4L18.5 9.5a2.8 2.8 0 0 0-4-4L4 16v4"/><path d="M13.5 6.5l4 4"/></svg><div class="t r13 sua" style="left:1830.40px;top:834px;letter-spacing:-1.550px;">Sửa</div><svg style="position:absolute;left:1864px;top:837px" width="12" height="12" viewBox="0 0 12 12" fill="none" stroke="#4f46e5" stroke-width="1.2" stroke-linecap="round" stroke-linejoin="round"><path d="M2 4 L6 8 L10 4"/></svg><div class="sep" style="top:913px"></div><div class="cb" style="left:100px;top:882px"></div><div class="t r14" style="left:141.00px;top:881px;letter-spacing:0.071px;">KH000038</div><div class="t r14" style="left:307px;top:881px;">Trần Minh</div><div class="t r14" style="left:762.50px;top:881px;letter-spacing:0.167px;">0888888888</div><div class="t r14" style="left:1060px;top:880px;">0</div><div class="t r14" style="left:1226px;top:880px;">0</div><div class="t r14 dash" style="left:1250.00px;top:881px;letter-spacing:1.000px;">--</div><div class="t r14" style="left:1416.00px;top:881px;letter-spacing:-0.357px;">Facebook</div><div class="tag" style="left:1583px;top:877.7px"></div><div class="t r13 tagt" style="left:1594.20px;top:881px;letter-spacing:0.358px;">Đang theo dõi</div><svg style="position:absolute;left:1806px;top:883px" width="14" height="14" viewBox="0 0 24 24" fill="none" stroke="#5b54e6" stroke-width="1.5" stroke-linecap="round" stroke-linejoin="round"><path d="M4 20h4L18.5 9.5a2.8 2.8 0 0 0-4-4L4 16v4"/><path d="M13.5 6.5l4 4"/></svg><div class="t r13 sua" style="left:1830.40px;top:881px;letter-spacing:-1.550px;">Sửa</div><svg style="position:absolute;left:1864px;top:884px" width="12" height="12" viewBox="0 0 12 12" fill="none" stroke="#4f46e5" stroke-width="1.2" stroke-linecap="round" stroke-linejoin="round"><path d="M2 4 L6 8 L10 4"/></svg></div></div><div style="position:absolute;left:83px;top:112px;width:1807px;height:31px;background:#e5e7eb;border-bottom:1px solid #d5d8dd"></div><div style="position:absolute;left:132px;top:119px;width:1px;height:18px;background:#d1d5db"></div><div style="position:absolute;left:298px;top:119px;width:1px;height:18px;background:#d1d5db"></div><div style="position:absolute;left:753px;top:119px;width:1px;height:18px;background:#d1d5db"></div><div style="position:absolute;left:909px;top:119px;width:1px;height:18px;background:#d1d5db"></div><div style="position:absolute;left:1075px;top:119px;width:1px;height:18px;background:#d1d5db"></div><div style="position:absolute;left:1241px;top:119px;width:1px;height:18px;background:#d1d5db"></div><div style="position:absolute;left:1407px;top:119px;width:1px;height:18px;background:#d1d5db"></div><div style="position:absolute;left:1573px;top:119px;width:1px;height:18px;background:#d1d5db"></div><div style="position:absolute;left:1739px;top:119px;width:1px;height:18px;background:#d1d5db"></div><div class="cb" style="left:100px;top:120px"></div><div class="t b14" style="left:141.00px;top:118px;letter-spacing:-0.375px;">Mã khách hàng</div><div class="t b14" style="left:307.50px;top:118px;letter-spacing:-0.577px;">Tên khách hàng</div><div class="t b14" style="left:762.50px;top:118px;letter-spacing:-0.500px;">Điện thoại</div><div class="t b14" style="left:971.00px;top:118px;letter-spacing:-0.500px;">Tổng chi tiêu</div><div class="t b14" style="left:1100.60px;top:118px;letter-spacing:-0.881px;">Số lượng đơn hàng</div><div class="t b14" style="left:1250.00px;top:118px;letter-spacing:-0.471px;">Nhãn khách hàng</div><div class="t b14" style="left:1416.00px;top:118px;letter-spacing:-0.550px;">Nguồn</div><div class="t b14" style="left:1582.80px;top:118px;letter-spacing:-0.478px;">Trạng thái</div><div class="t b14" style="left:1785.00px;top:118px;letter-spacing:-0.662px;">Chức năng</div><div style="position:absolute;left:1890px;top:287px;width:5px;height:251px;border-radius:3px;background:#b3b8c2"></div><div class="t r14" style="left:84.00px;top:903px;letter-spacing:-0.286px;color:#374151">Tổng số:</div><div class="t b14" style="left:147.50px;top:903px;letter-spacing:-0.500px;">65</div><div class="t r14" style="left:1490.00px;top:903px;letter-spacing:-0.150px;color:#374151">Số bản ghi trên trang</div><div class="box" style="left:1634px;top:897px;width:73px;height:29px;border-radius:8px"></div><div class="t r14" style="left:1651.00px;top:904px;letter-spacing:-0.600px;">50</div><svg style="position:absolute;left:1684px;top:906px" width="12" height="12" viewBox="0 0 12 12" fill="none" stroke="#374151" stroke-width="1.2" stroke-linecap="round" stroke-linejoin="round"><path d="M2 4 L6 8 L10 4"/></svg><div class="t r14" style="left:1725.50px;top:903px;letter-spacing:-0.625px;">1 - 2</div><svg style="position:absolute;left:1776px;top:906px" width="12" height="12" viewBox="0 0 12 12" fill="none" stroke="#374151" stroke-width="1.2" stroke-linecap="round" stroke-linejoin="round"><path d="M2 2v8M9 2L5 6l4 4"/></svg><svg style="position:absolute;left:1808px;top:906px" width="12" height="12" viewBox="0 0 12 12" fill="none" stroke="#374151" stroke-width="1.2" stroke-linecap="round" stroke-linejoin="round"><path d="M8 2L4 6l4 4"/></svg><svg style="position:absolute;left:1841px;top:906px" width="12" height="12" viewBox="0 0 12 12" fill="none" stroke="#374151" stroke-width="1.2" stroke-linecap="round" stroke-linejoin="round"><path d="M4 2l4 4-4 4"/></svg><svg style="position:absolute;left:1873px;top:906px" width="12" height="12" viewBox="0 0 12 12" fill="none" stroke="#374151" stroke-width="1.2" stroke-linecap="round" stroke-linejoin="round"><path d="M3 2l4 4-4 4M10 2v8"/></svg>
<div id="mask" style="position:absolute;left:0;top:0;width:1920px;height:953px;background:rgba(0,0,0,0.6)"></div>
<div id="modal" style="position:absolute;left:543px;top:199px;width:833px;height:555px;background:#fff;border-radius:8px;box-shadow:0 6px 16px rgba(0,0,0,.08),0 3px 6px -4px rgba(0,0,0,.12),0 9px 28px 8px rgba(0,0,0,.05)"></div>
<div class="t mtitle" style="left:557.00px;top:214px;letter-spacing:-1.000px;">Thêm mới Khách hàng</div><div class="radio on" style="left:766px;top:217px"></div><div class="t r14" style="left:787.70px;top:215px;letter-spacing:-0.517px;">Cá nhân</div><div class="radio" style="left:866px;top:217px"></div><div class="t r14" style="left:888.00px;top:215px;letter-spacing:-0.450px;">Tổ chức</div><svg style="position:absolute;left:1350px;top:218px" width="12" height="12" viewBox="0 0 12 12" stroke="#8c8c8c" stroke-width="2" stroke-linecap="round"><path d="M1.5 1.5l9 9M10.5 1.5l-9 9"/></svg><div style="position:absolute;left:556px;top:248px;width:130px;height:32px;border:1px solid #d1d5db;border-radius:17px"></div><div class="t r14" style="left:571.20px;top:256px;letter-spacing:-0.227px;">Thông tin cơ bản</div><div style="position:absolute;left:698px;top:248px;width:139px;height:34px;background:#4f46e5;border-radius:17px"></div><div class="t r14" style="left:712.40px;top:256px;letter-spacing:-0.056px;color:#fff">Thông tin bổ sung</div><div class="t r14" style="left:572.00px;top:300px;letter-spacing:-0.709px;">Số nợ tối đa</div><div class="box" style="left:706px;top:299px;width:236px;height:28px;border-radius:8px"></div><div class="t r14" style="left:927.3px;top:306px;">0</div><div class="t r14" style="left:976.20px;top:300px;letter-spacing:-0.675px;">Hạn nợ (ngày)</div><div class="box" style="left:1110px;top:299px;width:236px;height:28px;border-radius:8px"></div><div class="t r14" style="left:1331.3px;top:306px;">0</div><div class="t r14" style="left:572.00px;top:353px;letter-spacing:-0.400px;">Nguồn khách hàng</div><div class="box" style="left:706px;top:347px;width:236px;height:29px;border-radius:8px"></div><svg style="position:absolute;left:919px;top:356px" width="12" height="12" viewBox="0 0 12 12" fill="none" stroke="#374151" stroke-width="1.2" stroke-linecap="round" stroke-linejoin="round"><path d="M2 4 L6 8 L10 4"/></svg><div class="t r14" style="left:976.20px;top:353px;letter-spacing:-0.514px;">Nhóm khách hàng</div><div class="box" style="left:1110px;top:347px;width:236px;height:29px;border-radius:8px"></div><svg style="position:absolute;left:1323px;top:356px" width="12" height="12" viewBox="0 0 12 12" fill="none" stroke="#374151" stroke-width="1.2" stroke-linecap="round" stroke-linejoin="round"><path d="M2 4 L6 8 L10 4"/></svg><div style="position:absolute;left:572px;top:394px;width:776px;height:32px;background:#e5e7eb;border-bottom:1px solid #d1d5db"></div><div style="position:absolute;left:787px;top:401px;width:1px;height:18px;background:#d1d5db"></div><div class="t b14" style="left:580.40px;top:401px;letter-spacing:-0.460px;">Mạng xã hội</div><div class="t b14" style="left:796.40px;top:401px;letter-spacing:-0.495px;">Liên kết mạng xã hội</div><div class="t r14" style="left:909.00px;top:492px;letter-spacing:-0.267px;color:#374151">Không có dữ liệu</div><div style="position:absolute;left:1096px;top:709px;width:57px;height:30px;border:1px solid #d1d5db;border-radius:8px"></div><div class="t r14" style="left:1113.50px;top:716px;letter-spacing:-0.550px;">Hủy</div><div style="position:absolute;left:1163px;top:709px;width:55px;height:30px;border:1px solid #4f46e5;border-radius:8px"></div><div class="t r14" style="left:1180.00px;top:716px;letter-spacing:-1.200px;color:#4f46e5">Lưu</div><div style="position:absolute;left:1228px;top:709px;width:136px;height:32px;background:#4f46e5;border-radius:8px"></div><div class="t r14" style="left:1245.60px;top:716px;letter-spacing:-0.336px;color:#fff">Lưu và thêm mới</div>
</body></html>
